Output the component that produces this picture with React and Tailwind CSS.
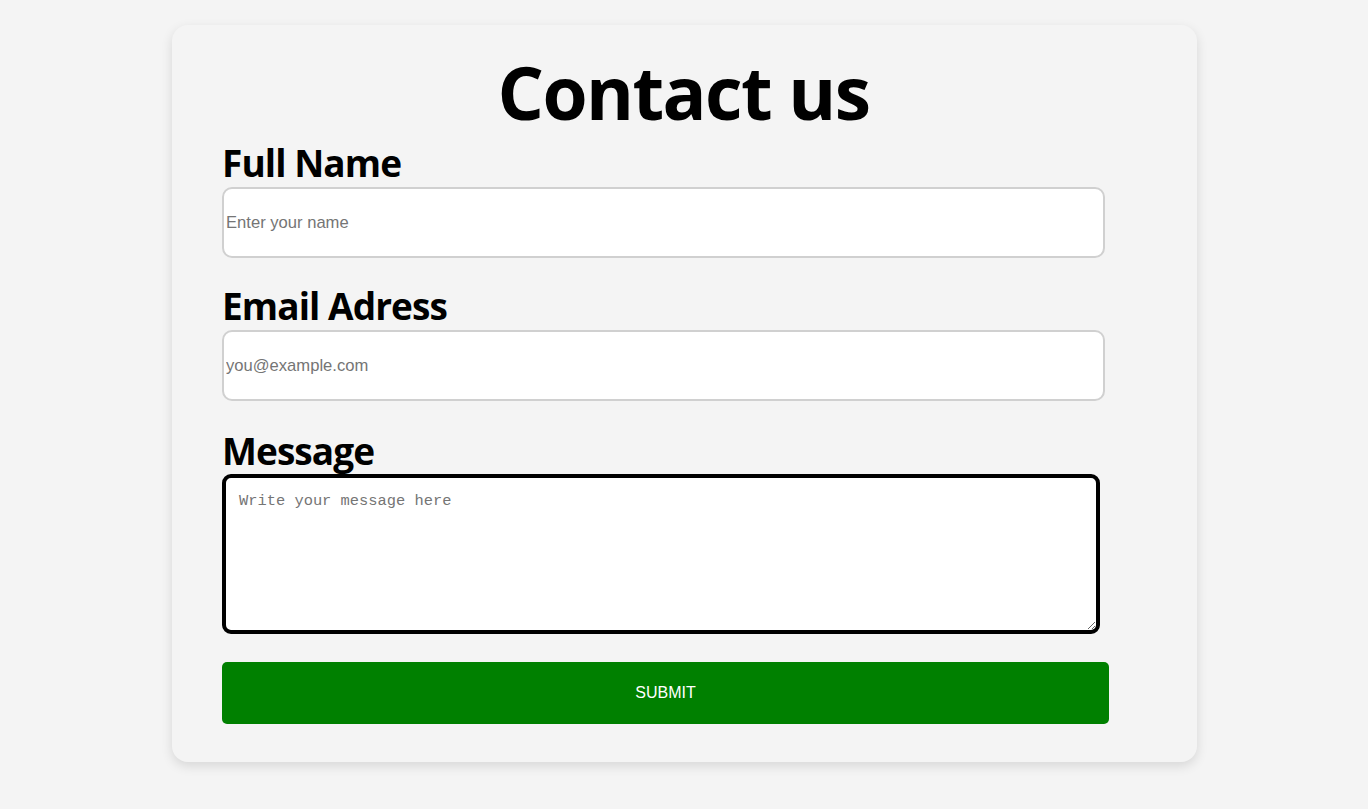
import React, { useState } from "react";

export default function App() {
    const [form, setForm] = useState({ name: "", email: "", message: "" });

    const update = (key) => (e) => setForm({ ...form, [key]: e.target.value });

    return (
        <div className="min-h-screen bg-[#f4f4f4] pt-[25px] font-['Liberation_Sans',Arial,sans-serif]">
            <form
                onSubmit={(e) => e.preventDefault()}
                className="w-[1025px] ml-[172px] bg-[#f4f4f4] rounded-[16px] shadow-[0_4px_12px_rgba(0,0,0,0.12)] px-[50px] pt-[30px] pb-[38px]"
            >
                <h1 className="text-center -ml-[2px] text-black font-bold text-[73px] leading-none tracking-[-0.022em] font-['Open_Sans',sans-serif]">
                    Contact us
                </h1>

                <label className="block mt-[16px] text-black font-bold text-[37px] leading-none tracking-[-0.025em] font-['Open_Sans',sans-serif]">
                    Full Name
                </label>
                <input
                    type="text"
                    value={form.name}
                    onChange={update("name")}
                    placeholder="Enter your name"
                    className="block mt-[6px] w-[883px] h-[71px] bg-white border-2 border-[#d0d0d0] rounded-[10px] px-[2px] text-[16.6px] text-black placeholder:text-[#757575] outline-none"
                />

                <label className="block mt-[29px] text-black font-bold text-[37px] leading-none tracking-[-0.025em] font-['Open_Sans',sans-serif]">
                    Email Adress
                </label>
                <input
                    type="email"
                    value={form.email}
                    onChange={update("email")}
                    placeholder="you@example.com"
                    className="block mt-[6px] w-[883px] h-[71px] bg-white border-2 border-[#d0d0d0] rounded-[10px] px-[2px] text-[16.6px] text-black placeholder:text-[#757575] outline-none"
                />

                <label className="block mt-[31px] text-black font-bold text-[37px] leading-none tracking-[-0.025em] font-['Open_Sans',sans-serif]">
                    Message
                </label>
                <textarea
                    value={form.message}
                    onChange={update("message")}
                    placeholder="Write your message here"
                    className="block mt-[5px] w-[878px] h-[160px] bg-white border-4 border-black rounded-[9px] px-[13px] pt-[14px] text-[15.4px] leading-[18px] font-['Liberation_Mono',monospace] text-black placeholder:text-[#757575] outline-none"
                />

                <button
                    type="submit"
                    className="block mt-[28px] w-[887px] h-[62px] bg-[#008000] rounded-[5px] text-white text-[16px] uppercase"
                >
                    Submit
                </button>
            </form>
        </div>
    );
}
